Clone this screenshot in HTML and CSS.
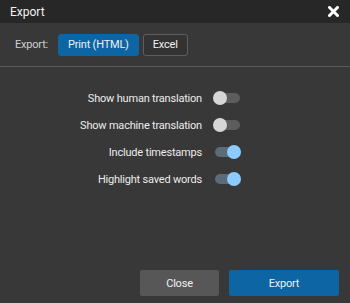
FILE: index.html
```html
<!DOCTYPE html>
<html lang="en">
<head>
  <meta charset="UTF-8" />
  <title>Export</title>
  <link rel="stylesheet" href="styles.css">
</head>
<body>
  <div class="dialog">
    <div class="header">
      <span class="title">Export</span>
      <span class="close-x">
        <svg width="11" height="11" viewBox="0 0 11 11"><path d="M1.5 1.5 L9.5 9.5 M9.5 1.5 L1.5 9.5" stroke="#fff" stroke-width="3" stroke-linecap="square"/></svg>
      </span>
    </div>

    <div class="format-row">
      <span class="format-label">Export:</span>
      <button class="fmt active">Print (HTML)</button>
      <button class="fmt">Excel</button>
    </div>

    <div class="options">
      <div class="option"><span>Show human translation</span><span class="toggle"></span></div>
      <div class="option"><span>Show machine translation</span><span class="toggle"></span></div>
      <div class="option"><span>Include timestamps</span><span class="toggle on"></span></div>
      <div class="option"><span>Highlight saved words</span><span class="toggle on"></span></div>
    </div>

    <div class="footer">
      <button class="btn close">Close</button>
      <button class="btn export">Export</button>
    </div>
  </div>
</body>
</html>
```

FILE: styles.css
```css
html, body { margin: 0; padding: 0; background: #383838; }
body { font-family: Roboto, "Liberation Sans", sans-serif; color: #e6e6e6; }
.dialog { width: 350px; height: 303px; display: flex; flex-direction: column; background: #383838; }
.header { height: 23px; background: #272727; display: flex; align-items: center; justify-content: space-between; padding: 0 11px 0 10px; box-sizing: border-box; }
.title { font-size: 12px; color: #f2f2f2; }
.close-x { display: flex; }
.format-row { display: flex; align-items: center; height: 44px; padding-left: 15px; border-bottom: 1px solid #5a5a5a; box-sizing: border-box; }
.format-label { font-size: 11px; letter-spacing: -0.2px; color: #cfcfcf; margin-right: 10px; }
.fmt { font-family: inherit; font-size: 11px; letter-spacing: -0.2px; height: 22px; padding: 0 9px; margin-right: 4px; background: #333; color: #f0f0f0; border: 1px solid #5e5e5e; border-radius: 3px; }
.fmt.active { background: #0d65a3; border-color: #0d65a3; }
.options { display: flex; flex-direction: column; gap: 13px; padding-top: 24px; padding-right: 110px; }
.option { display: flex; align-items: center; justify-content: flex-end; height: 14px; font-size: 11px; letter-spacing: -0.2px; color: #ececec; }
.toggle { position: relative; width: 25px; height: 10px; border-radius: 5px; background: #5d5d5d; margin-left: 13px; }
.toggle::after { content: ""; position: absolute; left: -2px; top: -2px; width: 14px; height: 14px; border-radius: 50%; background: #d6d6d6; }
.toggle.on { background: #5a6b7a; }
.toggle.on::after { left: 12px; background: #8dcbff; }
.footer { margin-top: auto; display: flex; justify-content: flex-end; gap: 10px; padding: 0 11px 7px 0; }
.btn { font-family: inherit; font-size: 11px; letter-spacing: -0.2px; height: 26px; border: none; border-radius: 2px; color: #f0f0f0; }
.btn.close { width: 79px; background: #575757; }
.btn.export { width: 110px; background: #0d65a3; }
```
